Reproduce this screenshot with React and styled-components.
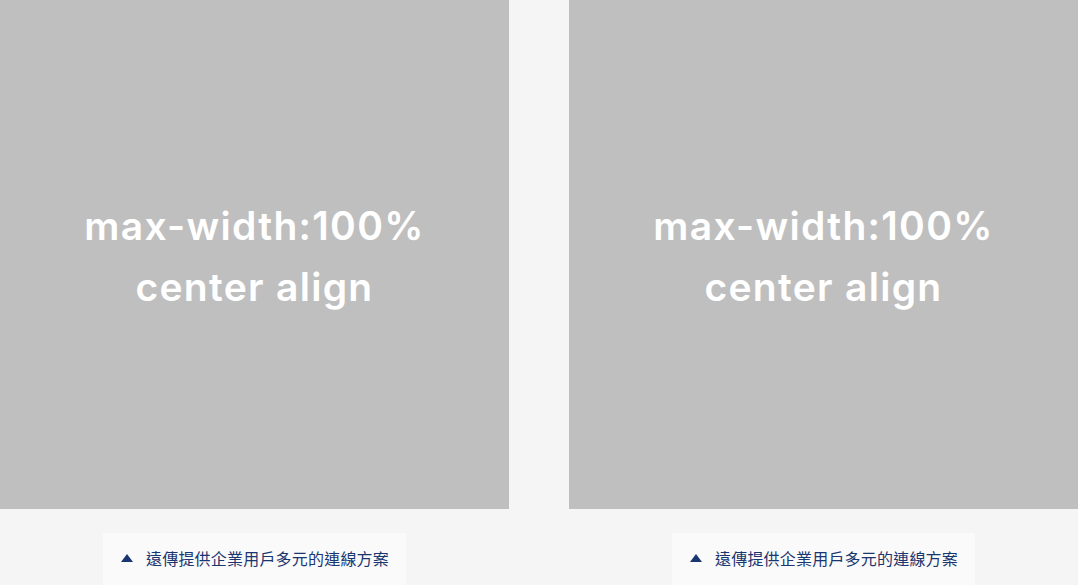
import React from "react";
import styled, { createGlobalStyle } from "styled-components";

const GlobalStyle = createGlobalStyle`
  html, body {
    margin: 0;
    padding: 0;
    background: #f5f5f5;
    font-family: "Noto Sans", "Noto Sans CJK TC", sans-serif;
  }
`;

const Grid = styled.div`
  display: grid;
  grid-template-columns: 1fr 1fr;
  column-gap: 60px;
  width: 1078px;
`;

const Figure = styled.figure`
  margin: 0;
  display: flex;
  flex-direction: column;
  align-items: center;
`;

const Placeholder = styled.div`
  width: 100%;
  aspect-ratio: 1 / 1;
  background: #bfbfbf;
  display: flex;
  align-items: center;
  justify-content: center;
  text-align: center;
  color: #ffffff;
  font-family: Inter, "Noto Sans", sans-serif;
  font-weight: 600;
  font-size: 39px;
  letter-spacing: 1.3px;
  line-height: 61px;
  padding-top: 2px;
  box-sizing: border-box;
`;

const Caption = styled.figcaption`
  margin-top: 24px;
  background: #fafafa;
  padding: 15px 17px 21px 18px;
  display: flex;
  align-items: center;
  gap: 13px;
  color: #1a3670;
  font-family: "Noto Sans CJK TC", sans-serif;
  font-size: 16px;
  letter-spacing: 0.2px;
  line-height: 20px;
`;

const Arrow = styled.span`
  width: 0;
  height: 0;
  border-left: 6px solid transparent;
  border-right: 6px solid transparent;
  border-bottom: 8px solid #1a3670;
`;

const items = [1, 2];

export default function App() {
  return (
    <>
      <GlobalStyle />
      <Grid>
        {items.map((i) => (
          <Figure key={i}>
            <Placeholder>
              <div>
                max-width:100%
                <br />
                center align
              </div>
            </Placeholder>
            <Caption>
              <Arrow />
              遠傳提供企業用戶多元的連線方案
            </Caption>
          </Figure>
        ))}
      </Grid>
    </>
  );
}
